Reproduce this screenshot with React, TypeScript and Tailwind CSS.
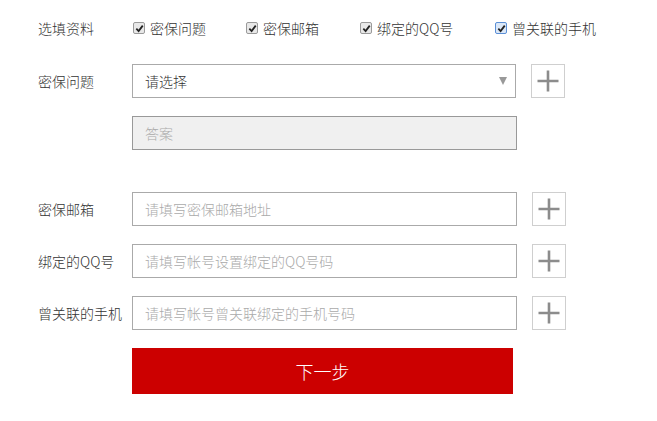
import React from 'react'

const font = { fontFamily: '"Noto Sans CJK SC", "Noto Sans", sans-serif' }

function Check({ focused }: { focused?: boolean }) {
  return (
    <span
      className={`inline-flex items-center justify-center w-[12px] h-[12px] rounded-[2px] border ${
        focused ? 'border-[#5b8fd6] bg-[#dbe8f8]' : 'border-[#9a9a9a] bg-[#e8e8e8]'
      }`}
    >
      <svg width="9" height="9" viewBox="0 0 10 10">
        <path d="M1.5 5.2 L4 7.8 L8.6 1.8" fill="none" stroke="#222" strokeWidth="2" />
      </svg>
    </span>
  )
}

function PlusBox() {
  return (
    <button className="ml-[15px] w-[34px] h-[34px] border border-[#cfcfcf] bg-white flex items-center justify-center">
      <svg width="24" height="24" viewBox="0 0 24 24">
        <path d="M12 1.5 V22.5 M1.5 12 H22.5" stroke="#8c8c8c" strokeWidth="2.6" />
      </svg>
    </button>
  )
}

function Row({ label, children, className = '' }: { label: string; children: React.ReactNode; className?: string }) {
  return (
    <div className={`flex items-center ${className}`}>
      <div className="w-[94px] text-[14px] text-[#333] font-light">{label}</div>
      {children}
    </div>
  )
}

export default function App() {
  // widths keep each checkbox where the original places it
  const options = [
    { label: '密保问题', w: 'w-[113px]' },
    { label: '密保邮箱', w: 'w-[114px]' },
    { label: '绑定的QQ号', w: 'w-[135px]' },
    { label: '曾关联的手机', w: '', focused: true },
  ]

  return (
    <div className="w-[657px] h-[421px] bg-white pl-[38px] pt-[17px] font-light" style={font}>
      {/* 选填资料 */}
      <Row label="选填资料" className="h-[22px]">
        <div className="flex items-center ml-[1px]">
          {options.map((o) => (
            <label key={o.label} className={`flex items-center gap-[5px] text-[14px] text-[#333] ${o.w}`}>
              <Check focused={o.focused} />
              <span>{o.label}</span>
            </label>
          ))}
        </div>
      </Row>

      {/* 密保问题 */}
      <Row label="密保问题" className="mt-[25px]">
        <div className="relative w-[384px] h-[34px] border border-[#aaa] flex items-center px-[12px] text-[14px] text-[#333]">
          请选择
          <span className="absolute right-[8px] top-[12px] w-0 h-0 border-l-[4px] border-r-[4px] border-t-[8px] border-l-transparent border-r-transparent border-t-[#999]" />
        </div>
        <PlusBox />
      </Row>

      <div className="flex mt-[18px]">
        <div className="w-[94px]" />
        <div className="w-[385px] h-[34px] border border-[#999] bg-[#f0f0f0] flex items-center px-[12px] text-[14px] text-[#aaa]">
          答案
        </div>
      </div>

      <Row label="密保邮箱" className="mt-[42px]">
        <input
          className="w-[385px] h-[34px] border border-[#aaa] px-[12px] text-[14px] text-[#333] placeholder:text-[#aaa] outline-none"
          placeholder="请填写密保邮箱地址"
        />
        <PlusBox />
      </Row>

      <Row label="绑定的QQ号" className="mt-[18px]">
        <input
          className="w-[385px] h-[34px] border border-[#aaa] px-[12px] text-[14px] text-[#333] placeholder:text-[#aaa] outline-none"
          placeholder="请填写帐号设置绑定的QQ号码"
        />
        <PlusBox />
      </Row>

      <Row label="曾关联的手机" className="mt-[18px]">
        <input
          className="w-[385px] h-[34px] border border-[#aaa] px-[12px] text-[14px] text-[#333] placeholder:text-[#aaa] outline-none"
          placeholder="请填写帐号曾关联绑定的手机号码"
        />
        <PlusBox />
      </Row>

      <div className="flex mt-[18px]">
        <div className="w-[94px]" />
        <button className="w-[381px] h-[46px] bg-[#cc0000] text-white text-[18px]">下一步</button>
      </div>
    </div>
  )
}
